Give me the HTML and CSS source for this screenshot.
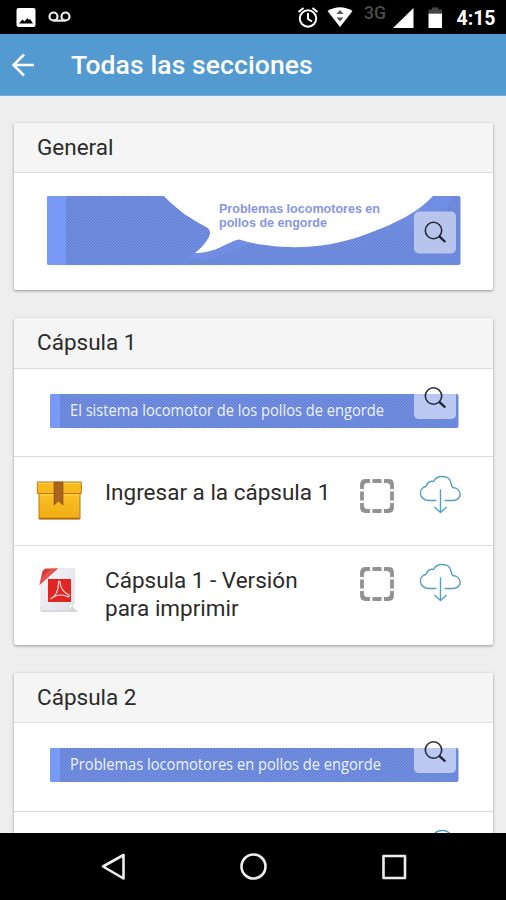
FILE: index.html
```html
<!DOCTYPE html>
<html lang="es">
<head>
<meta charset="utf-8">
<title>Todas las secciones</title>
<link rel="stylesheet" href="styles.css">
</head>
<body>
<svg class="defs" width="0" height="0" aria-hidden="true">
  <defs>
    <pattern id="dots" width="3" height="3" patternUnits="userSpaceOnUse">
      <rect width="3" height="3" fill="#7c97ea"/>
      <path d="M0 0h1.5v1.5H0zM1.5 1.5H3V3H1.5z" fill="#5d7bcd"/>
    </pattern>
    <symbol id="search" viewBox="0 0 24 24">
      <circle cx="10" cy="10" r="8.200" fill="none" stroke="#252b35" stroke-width="1.6"/>
      <path d="M15.800 15.800l6 5.700" fill="none" stroke="#20242b" stroke-width="2.4"/>
    </symbol>
    <symbol id="cloud" viewBox="0 0 42 40">
      <g fill="none" stroke="#559fc1" stroke-width="1.4" stroke-linejoin="round">
        <path d="M17.500 25.500H10C-.5 25-1.200 13 7 11.500C8 7.500 11.500 5.500 14.500 6.500C18-.5 31-.5 32 8.500L33.500 12.500C44 13 43 25 35 25.500H25.500"/>
        <path d="M21.500 14.500V37.500M15.500 32l6 5.500 6-5.500"/>
      </g>
    </symbol>
    <symbol id="box" viewBox="0 0 36 36">
      <g fill="none" stroke="#929292" stroke-width="3.800">
        <path d="M3 11V6.500q0-3.500 3.500-3.500H11M25 3h4.500q3.500 0 3.500 3.500V11M33 25v4.500q0 3.500-3.500 3.500H25M11 33H6.500q-3.500 0-3.500-3.500V25"/>
        <path d="M13.500 3h9M13.500 33h9M3 13.500v9M33 13.500v9"/>
      </g>
      <path d="M4.500 7.500v-3h3zM28.500 4.500h3v3zM31.500 28.500v3h-3zM7.500 31.500h-3v-3z" fill="#929292"/>
    </symbol>
  </defs>
</svg>
<div class="screen">
  <div class="status">
    <svg width="506" height="34" viewBox="0 0 506 34">
      <rect x="16.500" y="8" width="19" height="19" rx="2" fill="#fff"/>
      <path d="M19 23.500l3.500-4 2 2 3-3.500 1.500 2 1-1 3 4.500z" fill="#000"/>
      <g fill="none" stroke="#eee" stroke-width="2.200"><circle cx="53.500" cy="16.500" r="4"/><circle cx="65.500" cy="16.500" r="4"/><path d="M53.500 20.600h12"/></g>
      <g fill="none" stroke="#fff" stroke-width="2"><circle cx="308" cy="18.500" r="8.200"/><path d="M308 13v6l4 2.500M298.500 12l5-4M317.500 12l-5-4"/></g>
      <path d="M327.500 11Q340 3.500 352.500 11L340 27z" fill="#fff"/>
      <path d="M336.500 14l3.500-4 3.500 4zM336.500 17.500l3.500 4 3.500-4z" fill="#555"/>
      <text x="364" y="19" class="net" textLength="22" lengthAdjust="spacingAndGlyphs">3G</text>
      <path d="M393 28L413.500 8v20z" fill="#fff"/>
      <path d="M428.500 13v-3.500h3.500V7.500h6.500v2h3.500V13z" fill="#444"/><path d="M428.500 13.500h13.500V28h-13.500z" fill="#fff"/>
      <text x="456.500" y="25" class="clock" textLength="39" lengthAdjust="spacingAndGlyphs">4:15</text>
    </svg>
  </div>
  <header class="bar">
    <svg class="back" width="24" height="24" viewBox="0 0 24 24"><path d="M23 12H2.500M13 1.500L2.500 12 13 22.500" fill="none" stroke="#fff" stroke-width="2.500"/></svg>
    <h1>Todas las secciones</h1>
  </header>
  <main>
    <section class="card">
      <h2 class="general">General</h2>
      <div class="media tall">
        <svg width="414" height="70" viewBox="0 0 414 70">
          <defs>
            <clipPath id="hero"><rect width="413.500" height="69" rx="2"/></clipPath>
            <linearGradient id="fade" x1="0" y1="1" x2="0" y2="0"><stop offset="0" stop-color="#708de4" stop-opacity="0"/><stop offset=".9" stop-color="#708de4"/></linearGradient>
          </defs>
          <g clip-path="url(#hero)">
            <rect width="414" height="69" fill="url(#dots)"/>
            <rect width="19" height="69" fill="#7899f5"/>
            <path d="M148 57C172 57 180 48 193 44Q200 46 206 47L190 53 160 64 138 63z" fill="#718de4"/>
            <path d="M386 0C371 16 350 27 320 38C280 53 235 53 201 46L215 52C270 58 330 54 355 40Q390 25 408 0z" fill="url(#fade)"/>
            <path d="M117 0C132 16 146 24 159 31Q165 34 162 41Q157 50 148 57C170 57 180 46 192 43.500C204 47 218 50 240 51C270 52 296 47 320 38C350 27 371 16 386 0z" fill="#fff"/>
          </g>
          <text class="bubble" x="172" y="17" textLength="161" lengthAdjust="spacingAndGlyphs">Problemas locomotores en</text>
          <text class="bubble" x="172" y="31" textLength="108" lengthAdjust="spacingAndGlyphs">pollos de engorde</text>
          <rect x="367" y="15.500" width="42" height="42" rx="5" fill="#c2cdee" fill-opacity=".88"/>
          <use href="#search" x="376.500" y="24.500" width="24" height="24"/>
        </svg>
      </div>
    </section>
    <section class="card">
      <h2 class="one">Cápsula 1</h2>
      <div class="media">
        <svg width="409" height="42" viewBox="0 0 409 42">
          <rect y="8" width="408.500" height="34" rx="2" fill="url(#dots)"/>
          <path d="M10 8H2Q0 8 0 10v30q0 2 2 2h8z" fill="#7899f5"/>
          <text class="strip" x="20" y="30" textLength="314" lengthAdjust="spacingAndGlyphs">El sistema locomotor de los pollos de engorde</text>
          <path d="M364 8h42v20q0 5-5 5h-32q-5 0-5-5z" fill="#bac8f2"/>
          <use href="#search" x="373.500" y="0" width="24" height="24"/>
        </svg>
      </div>
      <div class="row first">
        <svg class="kind" width="46" height="46" viewBox="0 0 46 46">
          <defs><linearGradient id="gold" x2="0" y2="1"><stop stop-color="#fbc52c"/><stop offset="1" stop-color="#f0ad12"/></linearGradient></defs>
          <path d="M3 10h41v31H3z" fill="url(#gold)" stroke="#b97813"/>
          <path d="M1.300 4h44v11.500h-44z" fill="#f7b91b" stroke="#b97813"/>
          <path d="M2 5.300h43" stroke="#ffd96a"/><path d="M3.500 17h40" stroke="#ffd04a"/>
          <path d="M18 4h9v23l-4.500-4-4.500 4z" fill="#a8641f" stroke="#85480f" stroke-width=".6"/>
          <path d="M3.500 40.500h40" stroke="#a86713" stroke-width="1.500"/>
        </svg>
        <p>Ingresar a la cápsula 1</p>
        <svg class="check" width="36" height="36"><use href="#box" width="36" height="36"/></svg>
        <svg class="get" width="42" height="40"><use href="#cloud" width="42" height="40"/></svg>
      </div>
      <div class="row last">
        <svg class="kind" width="46" height="46" viewBox="0 0 46 46">
          <defs><linearGradient id="paper" x2="1" y2="1"><stop stop-color="#f5f5f9"/><stop offset="1" stop-color="#dfe0e7"/></linearGradient></defs>
          <path d="M5 46h37l-5-5H4z" fill="#bbb" opacity=".6"/>
          <path d="M17 2l22 1-1 35-5 7-28-1V17z" fill="url(#paper)" stroke="#dddde5" stroke-width=".7"/>
          <path d="M33 44.500v-6l5-1z" fill="#fff" stroke="#ccc" stroke-width=".5"/>
          <path d="M3.500 19L6 7q1-4 4-4.500h12z" fill="#d83a38"/>
          <path d="M3.500 19l1-6L15 2.500h7z" fill="#ee6460" opacity=".6"/>
          <path d="M12 13h23v23H12z" fill="#df2623"/>
          <path d="M14.500 33q8-4 8-16 0-3 1.500-1 .500 9 9 13 1 3-3 1-8-3-15.500 3z" fill="none" stroke="#ffdcd8" stroke-width="1.200"/>
        </svg>
        <p>Cápsula 1 - Versión<br>para imprimir</p>
        <svg class="check" width="36" height="36"><use href="#box" width="36" height="36"/></svg>
        <svg class="get" width="42" height="40"><use href="#cloud" width="42" height="40"/></svg>
      </div>
    </section>
    <section class="card">
      <h2 class="two">Cápsula 2</h2>
      <div class="media">
        <svg width="409" height="42" viewBox="0 0 409 42">
          <rect y="8" width="408.500" height="34" rx="2" fill="url(#dots)"/>
          <path d="M10 8H2Q0 8 0 10v30q0 2 2 2h8z" fill="#7899f5"/>
          <text class="strip" x="20" y="30" textLength="311" lengthAdjust="spacingAndGlyphs">Problemas locomotores en pollos de engorde</text>
          <path d="M364 8h42v20q0 5-5 5h-32q-5 0-5-5z" fill="#bac8f2"/>
          <use href="#search" x="373.500" y="0" width="24" height="24"/>
        </svg>
      </div>
      <div class="row">
        <div class="kind"></div><p></p><div class="check"></div>
        <svg class="get" width="42" height="40"><use href="#cloud" width="42" height="40"/></svg>
      </div>
    </section>
  </main>
  <nav>
    <svg width="506" height="67" viewBox="0 0 506 67" fill="none" stroke="#eee" stroke-width="2.600" stroke-linejoin="round">
      <path d="M103 33.500L123.500 22v23.500z"/><circle cx="253.500" cy="33.500" r="12"/><rect x="383.500" y="23" width="21.500" height="22"/>
    </svg>
  </nav>
</div>
</body>
</html>
```

FILE: styles.css
```css
* { box-sizing: border-box; }
body { margin: 0; background: #eee; font-family: Roboto, "Liberation Sans", sans-serif; color: #2b2b2b; }
svg { display: block; flex: none; }
.defs { height: 0; }
.screen { width: 506px; height: 900px; display: flex; flex-direction: column; overflow: hidden; }
.status { height: 34px; background: #000; flex: none; }
.net { font: 500 18px Roboto, sans-serif; fill: #4c4c4c; }
.clock { font: 700 20px Roboto, sans-serif; fill: #fff; }
.bar { height: 62px; flex: none; background: #529acf; border-bottom: 1px solid #74abd6; display: flex; align-items: center; padding-left: 11px; gap: 36px; }
.bar h1 { margin: 0; font-size: 26.500px; letter-spacing: .1px; font-weight: 500; color: #fff; line-height: 34px; white-space: nowrap; }
main { flex: 1; min-height: 0; overflow: hidden; padding: 27px 13px 0 14px; display: flex; flex-direction: column; gap: 28px; }
.card { flex: none; background: #fff; border-radius: 2px; box-shadow: 0 1px 3px rgba(0,0,0,.38); }
.card h2 { margin: 0; height: 50px; background: #f5f5f5; border-bottom: 1px solid #ddd; border-radius: 2px 2px 0 0; padding-left: 23px; font-size: 22.500px; font-weight: 400; line-height: 49px; }
.media { height: 89px; padding: 17px 0 0 36px; border-bottom: 1px solid #d9d9d9; }
.media.tall { height: 117px; padding: 23px 0 0 33px; border: 0; }
.card h2.one { height: 51px; }
.one + .media { height: 88px; }
.bubble { font: 700 12.500px "Liberation Sans", sans-serif; fill: #8797df; }
.strip { font: 400 15.500px "Open Sans", sans-serif; fill: #edf2ff; }
.row { height: 89px; display: flex; align-items: flex-start; padding: 20px 32px 0 22px; border-bottom: 1px solid #ddd; }
.row.first { padding-top: 21px; }
.row.last { height: 99px; border: 0; }
.row p { margin: 0 0 0 23px; width: 255px; font-size: 22.500px; line-height: 28px; white-space: nowrap; }
.kind { width: 46px; flex: none; }
.check { width: 36px; flex: none; }
.get { margin: -3px 0 0 24px; }
nav { height: 67px; flex: none; background: #000; }
```
